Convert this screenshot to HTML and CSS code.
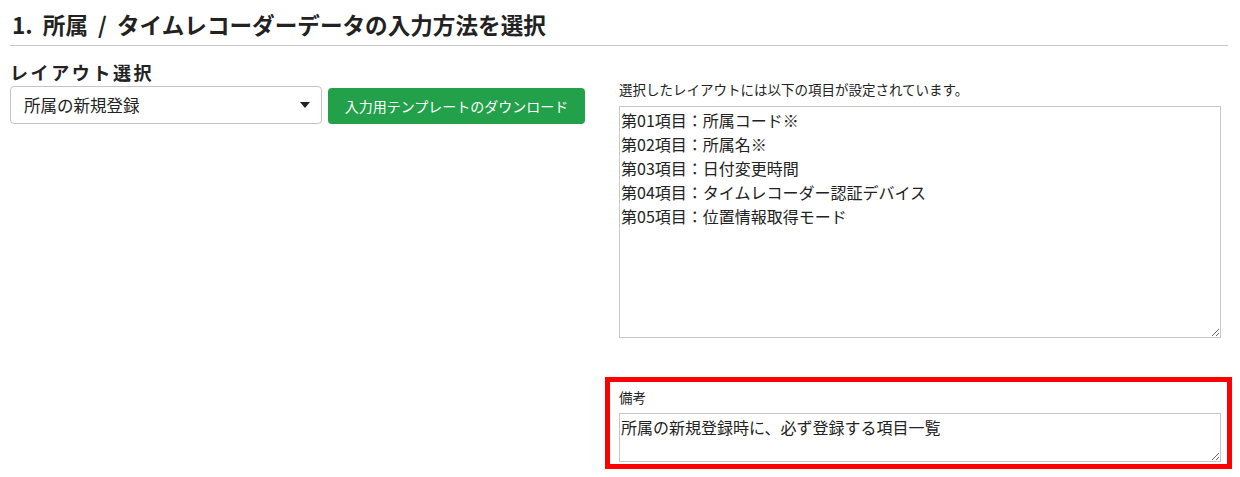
FILE: index.html
```html
<!DOCTYPE html>
<html lang="ja">
<head>
    <meta charset="UTF-8">
    <meta name="viewport" content="width=device-width, initial-scale=1.0">
    <title>入力方法を選択</title>
    <link rel="stylesheet" href="styles.css">
</head>
<body>
    <h1 class="step-title">1. 所属 / タイムレコーダーデータの入力方法を選択</h1>

    <div class="step-body">
        <div class="left-col">
            <div class="field-label">レイアウト選択</div>
            <div class="select-row">
                <div class="select-box">
                    <span>所属の新規登録</span>
                    <span class="caret"></span>
                </div>
                <button class="btn-download">入力用テンプレートのダウンロード</button>
            </div>
        </div>

        <div class="right-col">
            <div class="small-label">選択したレイアウトには以下の項目が設定されています。</div>
            <textarea class="items-area" readonly>第01項目：所属コード※
第02項目：所属名※
第03項目：日付変更時間
第04項目：タイムレコーダー認証デバイス
第05項目：位置情報取得モード</textarea>

            <div class="note-box">
                <div class="small-label">備考</div>
                <textarea class="note-area" readonly>所属の新規登録時に、必ず登録する項目一覧</textarea>
            </div>
        </div>
    </div>
</body>
</html>
```

FILE: styles.css
```css
body {
    margin: 0;
    padding: 0 12px 0 10px;
    font-family: "Noto Sans CJK JP", "Liberation Sans", sans-serif;
    color: #222;
    background: #fff;
}
.step-title {
    margin: 0;
    padding: 10px 0 5px 2px;
    font-size: 22.6px;
    line-height: 30px;
    font-weight: bold;
    word-spacing: 5px;
    color: #222;
    border-bottom: 1px solid #c8c8c8;
}
.step-body {
    display: grid;
    grid-template-columns: 595px 627px;
    margin-top: 13px;
}
.field-label {
    font-size: 18px;
    font-weight: bold;
    letter-spacing: 2.6px;
    line-height: 27px;
}
.select-row {
    display: flex;
    align-items: flex-start;
    gap: 6px;
}
.select-box {
    box-sizing: border-box;
    width: 312px;
    height: 38px;
    border: 1px solid #c4c4c4;
    border-radius: 4px;
    display: flex;
    align-items: center;
    justify-content: space-between;
    padding: 0 11px 0 13px;
    font-size: 16.5px;
}
.caret {
    width: 0;
    height: 0;
    border-left: 5px solid transparent;
    border-right: 5px solid transparent;
    border-top: 6px solid #222;
}
.btn-download {
    box-sizing: border-box;
    margin-top: 2px;
    width: 257px;
    height: 36px;
    border: none;
    border-radius: 4px;
    background: #22a14a;
    color: #fff;
    font-family: inherit;
    font-size: 14px;
}
.right-col {
    padding-top: 14px;
}
.small-label {
    font-size: 13.5px;
    line-height: 33px;
    padding-left: 14px;
}
textarea {
    display: block;
    box-sizing: border-box;
    margin-left: 14px;
    width: 602px;
    padding: 1px 1px;
    border: 1px solid #c8c8c8;
    font-family: inherit;
    font-size: 16px;
    line-height: 24px;
    color: #222;
    resize: vertical;
}
.items-area {
    height: 232px;
}
.note-box {
    margin-top: 39px;
    border: 5px solid #f00;
    padding: 0 0 2px 0;
}
.note-box .small-label {
    padding-left: 9px;
    line-height: 31px;
}
.note-box .note-area {
    margin-left: 9px;
    height: 49px;
}
```
